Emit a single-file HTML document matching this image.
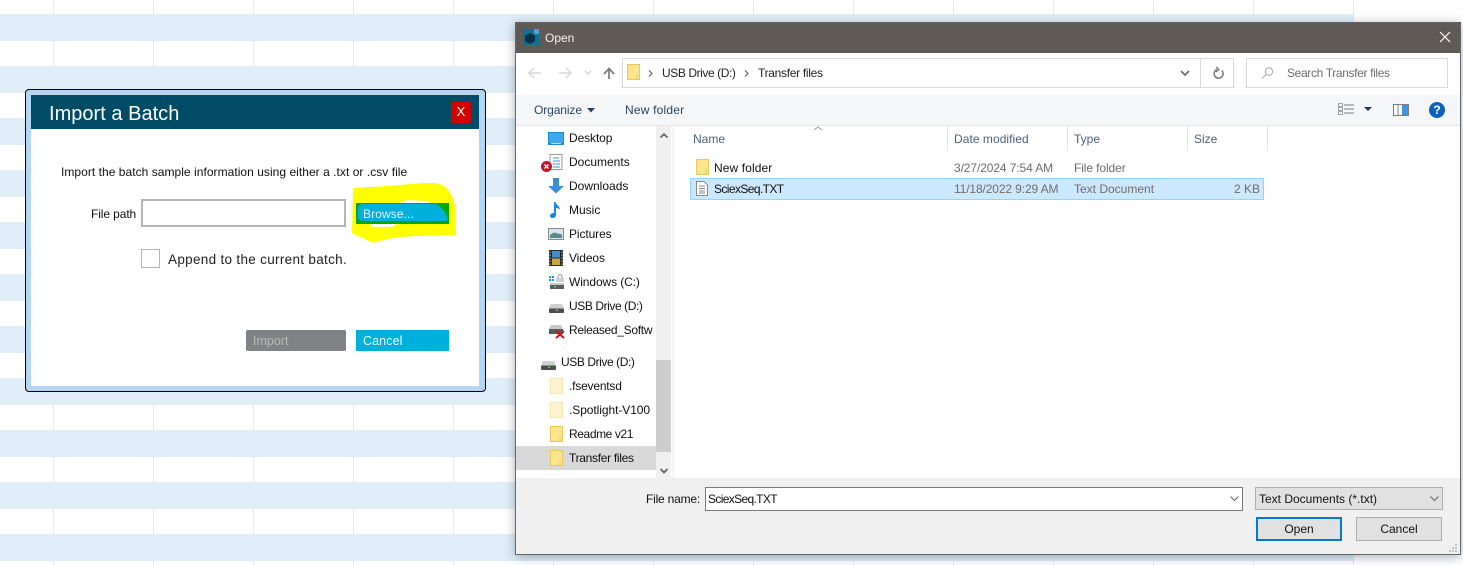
<!DOCTYPE html>
<html><head><meta charset="utf-8"><title>Import a Batch</title>
<style>
html,body{margin:0;padding:0;width:1463px;height:565px;overflow:hidden;background:#fff}
body{position:relative;font-family:"Liberation Sans",sans-serif;font-size:12px;color:#111}
.a{position:absolute}
.t{position:absolute;white-space:nowrap;line-height:16px}
svg{position:absolute;overflow:visible}
.b{background:#e0eef8;left:0;width:1354px;height:27px;position:absolute}
.v{background:#e2eaf2;top:0;width:1px;height:565px;position:absolute}
.g{color:#6d6d6d}
.h{color:#4c607a}
</style></head><body>

<div class="v" style="left:53px"></div><div class="v" style="left:153px"></div><div class="v" style="left:253px"></div><div class="v" style="left:353px"></div><div class="v" style="left:453px"></div><div class="v" style="left:553px"></div><div class="v" style="left:653px"></div><div class="v" style="left:753px"></div><div class="v" style="left:853px"></div><div class="v" style="left:953px"></div><div class="v" style="left:1053px"></div><div class="v" style="left:1153px"></div><div class="v" style="left:1253px"></div><div class="v" style="left:1353px"></div>
<div class="b" style="top:14px"></div><div class="b" style="top:66px"></div><div class="b" style="top:118px"></div><div class="b" style="top:170px"></div><div class="b" style="top:222px"></div><div class="b" style="top:274px"></div><div class="b" style="top:326px"></div><div class="b" style="top:378px"></div><div class="b" style="top:430px"></div><div class="b" style="top:482px"></div><div class="b" style="top:534px"></div>

<!-- Import dialog -->
<div class="a" style="left:25px;top:89px;width:459px;height:301px;border:1px solid #000;border-radius:4px;background:#b4d6f5"></div>
<div class="a" style="left:31px;top:95px;width:448px;height:291px;background:#fff"></div>
<div class="a" style="left:31px;top:95px;width:448px;height:34px;background:#004b66"></div>
<div class="t" style="left:49px;top:101px;font-size:20px;line-height:26px;color:#fff;letter-spacing:.02px">Import a Batch</div>
<div class="a" style="left:451px;top:102px;width:20px;height:21px;background:#d40000;border-radius:2px"></div>
<div class="t" style="left:451px;top:104px;width:20px;text-align:center;color:#fff;font-size:13px">X</div>
<div class="t" style="left:61px;top:164px;color:#111;letter-spacing:.04px">Import the batch sample information using either a .txt or .csv file</div>
<div class="t" style="left:91px;top:206px;letter-spacing:-.1px">File path</div>
<div class="a" style="left:141px;top:199px;width:201px;height:24px;border:2px solid #b5b5b5;background:#fff"></div>
<svg style="left:0;top:0" width="1463" height="565"><path d="M353 188 Q376 187 400 185 Q418 183 433 183 Q444 184 448 190 Q454 197 455 207 L456 235 Q428 235 400 237 Q385 239 373 243 L363 238 Q356 236 352 233 Z" fill="#ffff00"/><rect x="356" y="203" width="93" height="21" fill="#00a800"/><path d="M358 207 L361 204 L437 204 L445 212 L448 219 L446 221 L362 221 L358 219 Z" fill="#00b0dc"/><path d="M370 224 H397 L392 227 H373Z" fill="#fff"/><path d="M400 203 L408 200 L427 201 L430 203Z" fill="#fff"/></svg>
<div class="t" style="left:363px;top:206px;color:#e4f6fb;letter-spacing:.1px">Browse...</div>
<div class="a" style="left:141px;top:249px;width:17px;height:17px;border:1px solid #b5b5b5;background:#fff"></div>
<div class="t" style="left:168px;top:252px;font-size:13.5px;letter-spacing:.31px;color:#222">Append to the current batch.</div>
<div class="a" style="left:246px;top:330px;width:100px;height:21px;background:#808285;border-radius:2px"></div>
<div class="t" style="left:253px;top:333px;color:#b9b9b9;font-size:12.5px">Import</div>
<div class="a" style="left:356px;top:330px;width:93px;height:21px;background:#00b0dc"></div>
<div class="t" style="left:363px;top:333px;color:#eafaff;font-size:12.5px;letter-spacing:.1px">Cancel</div>

<!-- Open dialog -->
<div class="a" style="left:515px;top:22px;width:944px;height:531px;background:#fff;border:1px solid #666;box-shadow:0 2px 10px rgba(60,80,100,.45)"></div>
<div class="a" style="left:516px;top:23px;width:944px;height:30px;background:#5f5a55"></div>
<svg style="left:523px;top:29px" width="16" height="16"><rect width="16" height="16" fill="#0f6f95"/><path d="M11 0h5v5h-5z" fill="#4da4c6"/><path d="M7 4l5 2.800v5.400L7 15l-5-2.800V6.800z" fill="#0a2f45"/></svg>
<div class="t" style="left:545px;top:30px;color:#f4f4f4">Open</div>
<svg style="left:1439px;top:31px" width="12" height="12"><path d="M1 1L11 11M11 1L1 11" stroke="#fff" stroke-width="1.2"/></svg>

<!-- nav row -->
<svg style="left:528px;top:66px" width="100" height="14" fill="none"><path d="M1 7H13M6 2L1 7L6 12" stroke="#d8d8d8" stroke-width="1.5"/><path d="M31 7H43M38 2L43 7L38 12" stroke="#d8d8d8" stroke-width="1.5"/><path d="M57 5L60 8L63 5" stroke="#d0d0d0" stroke-width="1.200"/><path d="M76 8L81 2.500L86 8M81 3V13" stroke="#7a7a7a" stroke-width="1.700"/></svg>
<div class="a" style="left:622px;top:58px;width:610px;height:28px;border:1px solid #d9d9d9"></div>
<div class="a" style="left:1200px;top:59px;width:1px;height:28px;background:#d9d9d9"></div>
<svg style="left:627px;top:64px" width="13" height="16"><path d="M.5.500H12.500V15.500H.5Z" fill="#fde58e" stroke="#e9c860"/><path d="M10 10v5.500" stroke="#e9c860"/></svg>
<svg style="left:648px;top:69px" width="110" height="9" fill="none"><path d="M1 1.500L4 4.500L1 7.500" stroke="#777" stroke-width="1.300"/><path d="M97 1.500L100 4.500L97 7.500" stroke="#777" stroke-width="1.300"/></svg>
<div class="t" style="left:662px;top:65px;color:#222;letter-spacing:-.42px">USB Drive (D:)</div>
<div class="t" style="left:758px;top:65px;color:#222;letter-spacing:-.3px">Transfer files</div>
<svg style="left:1180px;top:70px" width="10" height="7" fill="none"><path d="M1 1L5 5L9 1" stroke="#666" stroke-width="1.600"/></svg>
<svg style="left:1212px;top:67px" width="12" height="13" fill="none"><path d="M9.800 3.500A4.500 4.500 0 1 1 5 2.500" stroke="#777" stroke-width="1.500"/><path d="M4 0L7 2.500L4 5" stroke="#777" stroke-width="1.300"/></svg>
<div class="a" style="left:1246px;top:58px;width:200px;height:28px;border:1px solid #d9d9d9"></div>
<svg style="left:1261px;top:67px" width="13" height="12" fill="none"><circle cx="8" cy="4.500" r="3.700" stroke="#aaa"/><path d="M5 7.500L1 11.500" stroke="#aaa"/></svg>
<div class="t g" style="left:1287px;top:65px;letter-spacing:-.35px">Search Transfer files</div>

<!-- command bar -->
<div class="a" style="left:516px;top:95px;width:944px;height:30px;background:#f5f6f7;border-bottom:1px solid #e5e5e5"></div>
<div class="t" style="left:534px;top:102px;color:#2b4463;letter-spacing:-.1px">Organize</div>
<svg style="left:587px;top:108px" width="8" height="5"><path d="M0 0H8L4 4.500Z" fill="#2b4463"/></svg>
<div class="t" style="left:625px;top:102px;color:#2b4463;letter-spacing:.2px">New folder</div>
<svg style="left:1338px;top:103px" width="36" height="13" fill="none"><path d="M.5 .5h4v3h-4zM.5 4.500h4v3h-4zM.5 8.500h4v3h-4z" stroke="#8a8a8a" stroke-width=".8"/><path d="M6 2h10M6 6h10M6 10h10" stroke="#7a7a7a"/><path d="M26 4H34L30 8Z" fill="#1f3553"/></svg>
<svg style="left:1393px;top:104px" width="16" height="12"><rect x=".5" y=".5" width="15" height="11" fill="#fff" stroke="#7d7d7d"/><rect x="9" y="1" width="6" height="10" fill="#3e94dd"/><path d="M5 1v10" stroke="#7d7d7d"/></svg>
<div class="a" style="left:1429px;top:102px;width:16px;height:16px;border-radius:50%;background:#0a62bd"></div>
<div class="t" style="left:1429px;top:102px;width:16px;text-align:center;color:#fff;font-weight:bold;font-size:12px">?</div>

<!-- nav pane -->
<svg style="left:548px;top:132px" width="16" height="14"><rect width="16" height="13" fill="#1a8ad8"/><rect x="1" y="1" width="14" height="10" fill="#3fa7ec"/><path d="M3 11.500H13" stroke="#fff" stroke-width=".7"/></svg>
<div class="t" style="left:569px;top:130px;letter-spacing:-.1px">Desktop</div>
<svg style="left:541px;top:154px" width="24" height="20"><path d="M9 .5H21V15.500H9Z" fill="#fff" stroke="#999"/><path d="M12 4H18M12 7H19M12 10H19M12 13H19" stroke="#4a8fd0"/><circle cx="5.500" cy="12.500" r="5.500" fill="#c4152c"/><path d="M3.500 10.500L7.500 14.500M7.500 10.500L3.500 14.500" stroke="#fff" stroke-width="1.300"/></svg>
<div class="t" style="left:569px;top:154px">Documents</div>
<svg style="left:548px;top:178px" width="16" height="16"><path d="M5 0H11V8H16L8 15.500L0 8H5Z" fill="#3d8edb"/></svg>
<div class="t" style="left:569px;top:178px">Downloads</div>
<svg style="left:550px;top:202px" width="12" height="16"><path d="M4 0H5.500C6 3 10 4 10 8C9 6.500 7.500 6 6 6V13C6 15 4 16 2.500 16S0 15 0 13.500S2 11 4 11Z" fill="#1b85dc"/></svg>
<div class="t" style="left:569px;top:202px">Music</div>
<svg style="left:548px;top:228px" width="16" height="12"><rect x=".5" y=".5" width="15" height="11" fill="#d8e6ee" stroke="#8a8a8a"/><path d="M2 7L6 4.500L14 6.500V10H2Z" fill="#5a8a8a"/></svg>
<div class="t" style="left:569px;top:226px;letter-spacing:-.1px">Pictures</div>
<svg style="left:549px;top:250px" width="14" height="16"><rect width="14" height="16" fill="#2b2b2b"/><rect x="3" y="1" width="8" height="6.500" fill="#3f8fd0"/><rect x="3" y="8.500" width="8" height="6.500" fill="#c7a53f"/><path d="M1 1.500V15M13 1.500V15" stroke="#bbb" stroke-dasharray="1.500 1.500"/></svg>
<div class="t" style="left:569px;top:250px;letter-spacing:-.1px">Videos</div>
<svg style="left:548px;top:274px" width="17" height="16"><path d="M1 2h2v2H1zM4 2h2v2H4zM1 5h2v2H1zM4 5h2v2H4z" fill="#18a0e0"/><path d="M10 4V2.500A2 2 0 0 1 14 2.500V4" stroke="#999" fill="none"/><rect x="8" y="4" width="8" height="4" fill="#c9d2da"/><rect x="2" y="9" width="14" height="6" fill="#5d5d5d"/><rect x="2" y="9" width="14" height="2" fill="#c8c8c8"/><rect x="6" y="12" width="2" height="1.500" fill="#3ddc3d"/></svg>
<div class="t" style="left:569px;top:274px;letter-spacing:-.1px">Windows (C:)</div>
<svg style="left:549px;top:304px" width="15" height="9"><path d="M2 0H13L15 4V9H0V4Z" fill="#d0d0d0"/><rect y="4.500" width="15" height="4.500" fill="#4e4e4e" rx="1"/><rect x="7" y="5.500" width="2" height="1.500" fill="#3ddc3d"/></svg>
<div class="t" style="left:569px;top:298px;letter-spacing:-.42px">USB Drive (D:)</div>
<svg style="left:549px;top:325px" width="16" height="14"><path d="M2 0H12L14 4V9H0V4Z" fill="#c8c8c8"/><rect y="4" width="14" height="5" fill="#5a5a5a"/><path d="M7 6L15 13M15 6L7 13" stroke="#d0101c" stroke-width="2"/></svg>
<div class="t" style="left:569px;top:322px;width:86px;overflow:hidden;letter-spacing:-.3px">Released_Softw (</div>
<svg style="left:541px;top:361px" width="15" height="9"><path d="M2 0H13L15 4V9H0V4Z" fill="#d0d0d0"/><rect y="4.500" width="15" height="4.500" fill="#4e4e4e" rx="1"/><rect x="7" y="5.500" width="2" height="1.500" fill="#3ddc3d"/></svg>
<div class="t" style="left:561px;top:354px;letter-spacing:-.42px">USB Drive (D:)</div>
<svg style="left:550px;top:378px" width="13" height="16"><path d="M.5.500H12.500V15.500H.5Z" fill="#fdf4cf" stroke="#f4e6b0"/></svg>
<div class="t" style="left:569px;top:378px;letter-spacing:-.2px">.fseventsd</div>
<svg style="left:550px;top:402px" width="13" height="16"><path d="M.5.500H12.500V15.500H.5Z" fill="#fdf4cf" stroke="#f4e6b0"/></svg>
<div class="t" style="left:569px;top:402px;letter-spacing:-.07px">.Spotlight-V100</div>
<svg style="left:550px;top:426px" width="13" height="16"><path d="M.5.500H12.500V15.500H.5Z" fill="#fde58e" stroke="#e9c860"/><path d="M10 10v5.500" stroke="#e9c860"/></svg>
<div class="t" style="left:569px;top:426px;letter-spacing:-.4px">Readme v21</div>
<div class="a" style="left:516px;top:446px;width:140px;height:24px;background:#d9d9d9"></div>
<svg style="left:550px;top:450px" width="13" height="16"><path d="M.5.500H12.500V15.500H.5Z" fill="#fde58e" stroke="#e9c860"/><path d="M10 10v5.500" stroke="#e9c860"/></svg>
<div class="t" style="left:569px;top:450px;letter-spacing:-.3px">Transfer files</div>

<div class="a" style="left:656px;top:126px;width:15px;height:352px;background:#f0f0f0"></div>
<div class="a" style="left:656px;top:360px;width:15px;height:92px;background:#cdcdcd"></div>
<div class="a" style="left:672px;top:126px;width:2px;height:352px;background:#f6f6f6"></div>
<svg style="left:660px;top:133px" width="8" height="6" fill="none"><path d="M.5 4.500L4 1.200L7.500 4.500" stroke="#606060" stroke-width="1.700"/></svg>
<svg style="left:660px;top:468px" width="8" height="6" fill="none"><path d="M.5 1L4 4.500L7.500 1" stroke="#606060" stroke-width="1.700"/></svg>

<!-- list -->
<svg style="left:813px;top:126px" width="10" height="5" fill="none"><path d="M1 4L5 1L9 4" stroke="#999"/></svg>
<div class="t h" style="left:693px;top:131px">Name</div>
<div class="t h" style="left:954px;top:131px;letter-spacing:.05px">Date modified</div>
<div class="t h" style="left:1074px;top:131px">Type</div>
<div class="t h" style="left:1194px;top:131px">Size</div>
<div class="a" style="left:947px;top:126px;width:1px;height:25px;background:#e5e5e5"></div>
<div class="a" style="left:1067px;top:126px;width:1px;height:25px;background:#e5e5e5"></div>
<div class="a" style="left:1187px;top:126px;width:1px;height:25px;background:#e5e5e5"></div>
<div class="a" style="left:1267px;top:126px;width:1px;height:25px;background:#e5e5e5"></div>

<svg style="left:696px;top:159px" width="13" height="16"><path d="M.5.500H12.500V15.500H.5Z" fill="#fde58e" stroke="#e9c860"/><path d="M10 10v5.500" stroke="#e9c860"/></svg>
<div class="t" style="left:714px;top:160px;letter-spacing:.1px">New folder</div>
<div class="t g" style="left:954px;top:160px;letter-spacing:-.1px">3/27/2024 7:54 AM</div>
<div class="t g" style="left:1074px;top:160px;letter-spacing:-.1px">File folder</div>

<div class="a" style="left:690px;top:178px;width:572px;height:20px;background:#cce8ff;border:1px solid #99d1ff"></div>
<svg style="left:696px;top:181px" width="12" height="15" fill="none"><path d="M.5.500H8L11.500 4V14.500H.5Z" fill="#fff" stroke="#888"/><path d="M3 5H9M3 7.500H9M3 10H9M3 12H9" stroke="#888"/></svg>
<div class="t" style="left:714px;top:181px;letter-spacing:-.6px">SciexSeq.TXT</div>
<div class="t g" style="left:954px;top:181px;letter-spacing:-.12px">11/18/2022 9:29 AM</div>
<div class="t g" style="left:1074px;top:181px">Text Document</div>
<div class="t g" style="left:1200px;top:181px;width:60px;text-align:right">2 KB</div>

<!-- footer -->
<div class="a" style="left:516px;top:478px;width:944px;height:76px;background:#f0f0f0"></div>
<div class="t" style="left:646px;top:491px;letter-spacing:-.2px">File name:</div>
<div class="a" style="left:705px;top:487px;width:536px;height:22px;background:#fff;border:1px solid #7a7a7a"></div>
<div class="t" style="left:708px;top:491px;letter-spacing:-.65px">SciexSeq.TXT</div>
<svg style="left:1230px;top:496px" width="9" height="6" fill="none"><path d="M.5 .5L4.500 4.500L8.500 .5" stroke="#666"/></svg>
<div class="a" style="left:1255px;top:487px;width:186px;height:21px;background:#e1e1e1;border:1px solid #adadad"></div>
<div class="t" style="left:1259px;top:491px">Text Documents (*.txt)</div>
<svg style="left:1430px;top:496px" width="9" height="6" fill="none"><path d="M.5 .5L4.500 4.500L8.500 .5" stroke="#666"/></svg>
<div class="a" style="left:1256px;top:517px;width:82px;height:20px;background:#e1e1e1;border:2px solid #0078d7"></div>
<div class="t" style="left:1256px;top:521px;width:86px;text-align:center">Open</div>
<div class="a" style="left:1356px;top:517px;width:84px;height:22px;background:#e1e1e1;border:1px solid #adadad"></div>
<div class="t" style="left:1356px;top:521px;width:86px;text-align:center">Cancel</div>
<svg style="left:1449px;top:544px" width="9" height="9"><path d="M6 0h2v2H6zM3 3h2v2H3zM6 3h2v2H6zM0 6h2v2H0zM3 6h2v2H3zM6 6h2v2H6z" fill="#c4c4c4"/></svg>
</body></html>
